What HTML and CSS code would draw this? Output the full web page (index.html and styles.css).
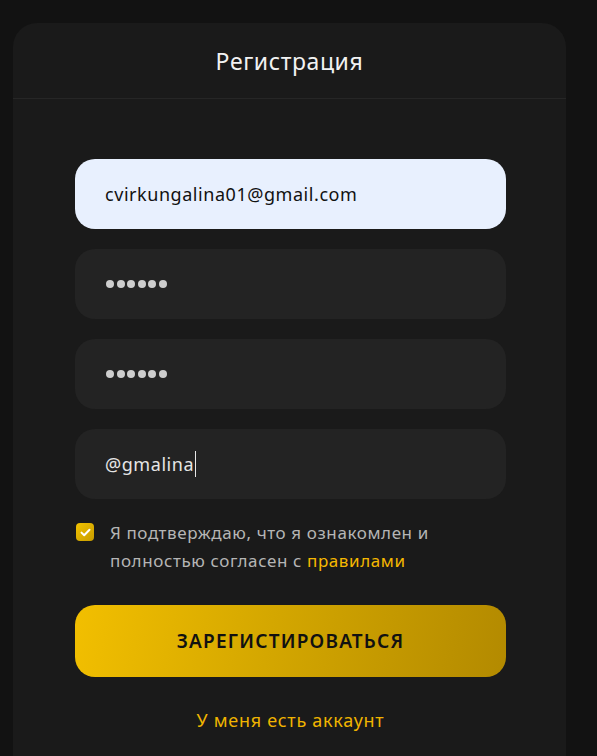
FILE: index.html
```html
<!DOCTYPE html>
<html lang="ru">
<head>
<meta charset="utf-8">
<link rel="stylesheet" href="styles.css">
</head>
<body>
<div class="card">
  <div class="card-header">Регистрация</div>
  <form class="form">
    <div class="field field-autofill">cvirkungalina01@gmail.com</div>
    <div class="field field-dark"><span class="dots"><i></i><i></i><i></i><i></i><i></i><i></i></span></div>
    <div class="field field-dark"><span class="dots"><i></i><i></i><i></i><i></i><i></i><i></i></span></div>
    <div class="field field-dark">@gmalina<span class="caret"></span></div>
    <label class="agree">
      <span class="check">
        <svg width="11" height="9" viewBox="0 0 11 9"><path d="M1.5 4.6 L4.2 7.2 L9.5 1.8" fill="none" stroke="#fff" stroke-width="2" stroke-linecap="round" stroke-linejoin="round"/></svg>
      </span>
      <span class="agree-text">Я подтверждаю, что я ознакомлен и полностью согласен с <span class="link">правилами</span></span>
    </label>
    <div class="btn">ЗАРЕГИСТИРОВАТЬСЯ</div>
    <div class="login-link">У меня есть аккаунт</div>
  </form>
</div>
</body>
</html>
```
FILE: styles.css
```css
html, body {
  margin: 0;
  padding: 0;
  background: #121212;
  font-family: "Noto Sans", "Open Sans", sans-serif;
}
body {
  padding: 23px 0 0 13px;
  height: 756px;
  box-sizing: border-box;
  overflow: hidden;
}
.card {
  width: 553px;
  background: #1a1a1a;
  border-radius: 24px 24px 0 0;
  min-height: 760px;
}
.card-header {
  height: 75px;
  display: flex;
  align-items: center;
  justify-content: center;
  color: #f2f2f2;
  font-size: 23px;
  letter-spacing: 0.6px;
  border-bottom: 1px solid #262626;
}
.form {
  padding: 60px 60px 0 62px;
  display: flex;
  flex-direction: column;
}
.field {
  height: 70px;
  border-radius: 20px;
  display: flex;
  align-items: center;
  padding-left: 30px;
  font-size: 18px;
  letter-spacing: 0.55px;
  margin-bottom: 20px;
}
.field-autofill {
  background: #e8f0fe;
  color: #111;
}
.field-dark {
  background: #232323;
  color: #e6e6e6;
}
.dots {
  display: flex;
  gap: 2.5px;
  margin-left: 1px;
}
.dots i {
  display: block;
  width: 8px;
  height: 8px;
  border-radius: 50%;
  background: #cdcdcd;
}
.caret {
  display: inline-block;
  width: 1px;
  height: 26px;
  background: #e6e6e6;
  margin-left: 1px;
}
.agree {
  display: flex;
  align-items: flex-start;
  gap: 16px;
  padding-right: 20px;
  color: #b5b5b5;
  font-size: 17px;
  letter-spacing: 0.6px;
  line-height: 28px;
}
.check {
  flex: none;
  width: 18px;
  height: 18px;
  margin-top: 4px;
  margin-left: 1px;
  border-radius: 4px;
  background: linear-gradient(135deg, #f2c200, #c79c00);
  display: flex;
  align-items: center;
  justify-content: center;
}
.link {
  color: #f5b800;
}
.btn {
  margin-top: 30px;
  height: 72px;
  border-radius: 20px;
  background: linear-gradient(100deg, #f2bf00 0%, #d4a700 45%, #b38a00 100%);
  display: flex;
  align-items: center;
  justify-content: center;
  color: #111;
  font-weight: 600;
  font-size: 19px;
  letter-spacing: 1.2px;
}
.login-link {
  margin-top: 31px;
  text-align: center;
  color: #f0b400;
  font-size: 18px;
  letter-spacing: 0.7px;
}
```
